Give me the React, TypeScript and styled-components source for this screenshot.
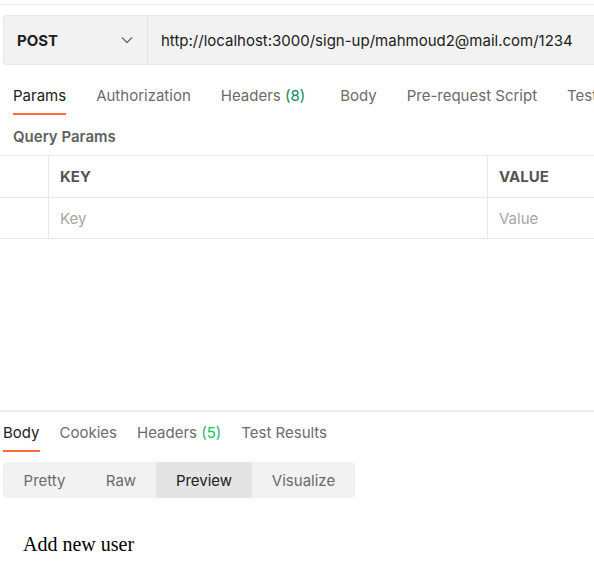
import React from "react";
import styled, { createGlobalStyle } from "styled-components";

const Global = createGlobalStyle`
  html, body { margin: 0; padding: 0; background: #ffffff; }
  body { font-family: Inter, "Noto Sans", sans-serif; color: #212121; }
  * { box-sizing: border-box; }
`;

const Page = styled.div`
  width: 594px;
  height: 575px;
  overflow: hidden;
  display: flex;
  flex-direction: column;
  padding-top: 4px;
`;

const TopRule = styled.div`
  height: 1px;
  background: #ececec;
`;

const RequestBar = styled.div`
  display: flex;
  height: 50px;
  margin: 10px 0 0 3px;
  background: #f2f2f2;
  border: 1px solid #e6e6e6;
  border-right: none;
  border-radius: 4px 0 0 4px;
  align-items: stretch;
`;

const Method = styled.div`
  width: 144px;
  display: flex;
  align-items: center;
  justify-content: space-between;
  padding: 0 14px 0 13px;
  border-right: 1px solid #e3e3e3;
  font-weight: 700;
  font-size: 15px;
  color: #212121;
`;

const Url = styled.div`
  display: flex;
  align-items: center;
  padding-left: 13px;
  font-size: 15px;
  color: #212121;
  white-space: nowrap;
`;

const TabBar = styled.div<{ $gap: number; $left: number; $top: number }>`
  display: flex;
  gap: ${(p) => p.$gap}px;
  padding-left: ${(p) => p.$left}px;
  margin-top: ${(p) => p.$top}px;
  white-space: nowrap;
`;

const Tab = styled.div<{ $active?: boolean; $extra?: number }>`
  position: relative;
  font-size: 15px;
  line-height: 20px;
  padding-bottom: 9px;
  margin-right: ${(p) => p.$extra ?? 0}px;
  color: ${(p) => (p.$active ? "#212121" : "#6b6b6b")};
  &::after {
    content: "";
    position: absolute;
    left: 0;
    right: 0;
    bottom: 0;
    height: 2px;
    background: ${(p) => (p.$active ? "#ff6c37" : "transparent")};
  }
`;

const Count = styled.span<{ $color: string }>`
  color: ${(p) => p.$color};
`;

const SectionTitle = styled.div`
  font-size: 15px;
  font-weight: 600;
  line-height: 20px;
  color: #616161;
  padding-left: 13px;
  margin-top: 12px;
`;

const Table = styled.div`
  margin-top: 8px;
  border-top: 1px solid #e8e8e8;
`;

const Row = styled.div<{ $height: number }>`
  display: grid;
  grid-template-columns: 48px 439px 1fr;
  height: ${(p) => p.$height}px;
  border-bottom: 1px solid #e8e8e8;
`;

const Cell = styled.div<{ $head?: boolean; $first?: boolean }>`
  display: flex;
  align-items: center;
  padding-left: 11px;
  border-left: ${(p) => (p.$first ? "none" : "1px solid #e8e8e8")};
  font-size: 15px;
  font-weight: ${(p) => (p.$head ? 700 : 400)};
  color: ${(p) => (p.$head ? "#555555" : "#a6a6a6")};
`;

const Spacer = styled.div`
  height: 171px;
`;

const Divider = styled.div`
  height: 2px;
  background: #ededed;
`;

const Segmented = styled.div`
  display: flex;
  width: 352px;
  height: 36px;
  margin: 10px 0 0 3px;
  background: #f2f2f2;
  border-radius: 4px;
  overflow: hidden;
`;

const Segment = styled.div<{ $active?: boolean; $width: number }>`
  display: flex;
  align-items: center;
  justify-content: center;
  width: ${(p) => p.$width}px;
  font-size: 15px;
  color: ${(p) => (p.$active ? "#212121" : "#6b6b6b")};
  background: ${(p) => (p.$active ? "#e4e4e4" : "transparent")};
`;

const Preview = styled.div`
  padding: 35px 0 0 23px;
  font-family: "Liberation Serif", "Times New Roman", serif;
  font-size: 20px;
  color: #000000;
`;

const Chevron = () => (
  <svg width="12" height="8" viewBox="0 0 12 8" fill="none">
    <path d="M1 1.5L6 6.5L11 1.5" stroke="#6b6b6b" strokeWidth="1.3" />
  </svg>
);

export default function App() {
  return (
    <Page>
      <Global />
      <TopRule />
      <RequestBar>
        <Method>
          <span>POST</span>
          <Chevron />
        </Method>
        <Url>http://localhost:3000/sign-up/mahmoud2@mail.com/1234</Url>
      </RequestBar>
      <TabBar $gap={30} $left={13} $top={21}>
        <Tab $active>Params</Tab>
        <Tab>Authorization</Tab>
        <Tab $extra={5}>
          Headers <Count $color="#0b8a5e">(8)</Count>
        </Tab>
        <Tab>Body</Tab>
        <Tab>Pre-request Script</Tab>
        <Tab>Tests</Tab>
      </TabBar>
      <SectionTitle>Query Params</SectionTitle>
      <Table>
        <Row $height={42}>
          <Cell $first />
          <Cell $head>KEY</Cell>
          <Cell $head>VALUE</Cell>
        </Row>
        <Row $height={41}>
          <Cell $first />
          <Cell>Key</Cell>
          <Cell>Value</Cell>
        </Row>
      </Table>
      <Spacer />
      <Divider />
      <TabBar $gap={20} $left={3} $top={11}>
        <Tab $active>Body</Tab>
        <Tab>Cookies</Tab>
        <Tab>
          Headers <Count $color="#1cbb5c">(5)</Count>
        </Tab>
        <Tab>Test Results</Tab>
      </TabBar>
      <Segmented>
        <Segment $width={83}>Pretty</Segment>
        <Segment $width={70}>Raw</Segment>
        <Segment $width={96} $active>
          Preview
        </Segment>
        <Segment $width={103}>Visualize</Segment>
      </Segmented>
      <Preview>Add new user</Preview>
    </Page>
  );
}
